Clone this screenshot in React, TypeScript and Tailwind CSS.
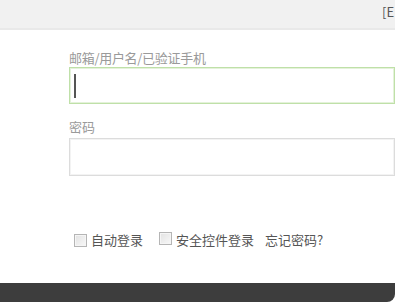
import React from "react";

function Check() {
  return (
    <span className="inline-block w-[13px] h-[13px] border border-[#b5b5b5] bg-gradient-to-br from-[#e2e2e2] to-[#f8f8f8] shadow-[inset_0_0_0_1px_#f5f5f5]" />
  );
}

export default function App() {
  return (
    <div
      className="w-[401px] h-[302px] bg-white overflow-hidden relative"
      style={{ fontFamily: '"Noto Sans CJK SC", "Noto Sans", sans-serif' }}
    >
      <div className="w-[395px] h-full flex flex-col">
        <div className="h-[30px] bg-[#f1f1f1] border-b-2 border-[#e9e9e9] whitespace-nowrap pl-[382px] pt-[4px] text-[13px] leading-[16px] text-[#555]">
          [E
        </div>
        <div className="pl-[69px] pt-[20px] flex flex-col">
          <div className="text-[13px] leading-[16px] text-[#9a9a9a] h-[16px] tracking-[-0.3px]">邮箱/用户名/已验证手机</div>
          <div className="mt-[1px] h-[37px] border border-[#bfe0a8] shadow-[inset_0_0_0_1px_#e4f2da] flex items-center pl-[4px]">
            <span className="w-[2px] h-[24px] bg-[#555]" />
          </div>
          <div className="mt-[15px] text-[13px] leading-[16px] text-[#9a9a9a] h-[16px]">密码</div>
          <div className="mt-[3px] h-[38px] border border-[#dcdcdc] shadow-[inset_0_0_0_1px_#f3f3f3]" />
          <div className="mt-[56px] pl-[5px] flex items-center h-[16px] text-[13px] leading-[16px] text-[#555]">
            <Check />
            <span className="ml-[4px]">自动登录</span>
            <span className="ml-[16px]"><Check /></span>
            <span className="ml-[4px]">安全控件登录</span>
            <span className="ml-[11px]">忘记密码?</span>
          </div>
        </div>
        <div className="mt-auto h-[19px] bg-[#3d3d3d] rounded-br-[8px]" />
      </div>
    </div>
  );
}
